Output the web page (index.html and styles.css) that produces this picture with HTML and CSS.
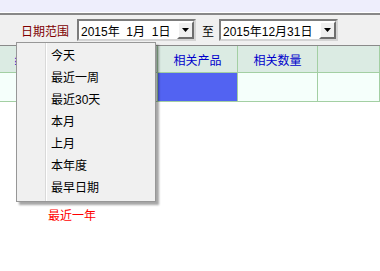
FILE: index.html
```html
<!DOCTYPE html>
<html lang="zh-CN">
<head>
  <meta charset="UTF-8" />
  <title>日期范围</title>
  <link rel="stylesheet" href="styles.css">
</head>
<body>

<div class="topbar"></div>

<div class="toolbar">
  <span class="label">日期范围</span>
  <div class="datebox">
    <span class="date-text">2015年&nbsp;&nbsp;1月&nbsp;&nbsp;1日</span>
    <span class="drop"><svg width="7" height="4" viewBox="0 0 7 4"><path d="M0 0h7L3.5 4z" fill="#000"/></svg></span>
  </div>
  <span class="to">至</span>
  <div class="datebox">
    <span class="date-text">2015年12月31日</span>
    <span class="drop"><svg width="7" height="4" viewBox="0 0 7 4"><path d="M0 0h7L3.5 4z" fill="#000"/></svg></span>
  </div>
</div>

<table class="grid">
  <tr>
    <th class="c1">编号名称</th>
    <th class="c2">订单日期</th>
    <th class="c3">相关产品</th>
    <th class="c4">相关数量</th>
    <th></th>
  </tr>
  <tr>
    <td></td>
    <td></td>
    <td class="selected"></td>
    <td></td>
    <td></td>
  </tr>
</table>

<div class="menu">
  <div class="item">今天</div>
  <div class="item">最近一周</div>
  <div class="item">最近30天</div>
  <div class="item">本月</div>
  <div class="item">上月</div>
  <div class="item">本年度</div>
  <div class="item">最早日期</div>
  <div class="extra">最近一年</div>
</div>

</body>
</html>
```

FILE: styles.css
```css
body {
  margin: 0;
  font-family: "Liberation Sans", "Noto Sans CJK SC", sans-serif;
  font-size: 12px;
  background: #fff;
}
.topbar {
  height: 12px;
  background: #eeeefc;
  border-bottom: 1px solid #fff;
}
.toolbar {
  display: flex;
  align-items: center;
  height: 30px;
  padding-left: 21px;
  background: #f0f0f0;
  border-top: 2px solid #888;
  border-bottom: 1px solid #8a8a8a;
  box-sizing: content-box;
}
.label {
  color: #800000;
  width: 48px;
  margin-right: 8px;
}
.datebox {
  display: flex;
  align-items: center;
  justify-content: space-between;
  width: 119px;
  height: 22px;
  box-sizing: border-box;
  background: #fff;
  border: 2px solid;
  border-color: #7c7c7c #d4d4d4 #d4d4d4 #7c7c7c;
  padding-left: 2px;
}
.date-text {
  color: #000;
  white-space: nowrap;
}
.drop {
  display: flex;
  align-items: center;
  justify-content: center;
  width: 17px;
  height: 18px;
  box-sizing: border-box;
  background: #f0f0f0;
  border: 2px solid;
  border-color: #fff #6e6e6e #6e6e6e #fff;
}
.to {
  margin: 0 5px 0 6px;
  color: #000;
}
.grid {
  border-collapse: collapse;
  table-layout: fixed;
  width: 380px;
}
.grid th,
.grid td {
  border: 1px solid #a3cfa3;
  padding: 0;
  font-weight: normal;
}
.grid tr:first-child th {
  border-top: none;
}
.grid th:first-child,
.grid td:first-child {
  border-left: none;
}
.grid th {
  height: 26px;
  background: #dbebe3;
  color: #0000cc;
  text-align: center;
}
.grid td {
  height: 28px;
  background: #f5fffb;
}
.grid td.selected {
  background: #5263f2;
}
.c1 { width: 77px; }
.c2 { width: 79px; }
.c3 { width: 79px; }
.c4 { width: 79px; }
.menu {
  position: absolute;
  left: 16px;
  top: 42px;
  width: 138px;
  padding: 2px 0;
  background: #f0f0f0;
  border: 1px solid #979797;
  box-shadow: 3px 3px 2px rgba(0, 0, 0, 0.35);
  background-image: linear-gradient(#d9d9d9, #d9d9d9), linear-gradient(#fff, #fff);
  background-size: 1px 100%, 1px 100%;
  background-position: 28px 0, 29px 0;
  background-repeat: no-repeat;
}
.item {
  height: 22px;
  line-height: 22px;
  padding-left: 34px;
  color: #000;
}
.extra {
  position: absolute;
  left: 31px;
  top: 163px;
  color: #f00;
  white-space: nowrap;
}
```
